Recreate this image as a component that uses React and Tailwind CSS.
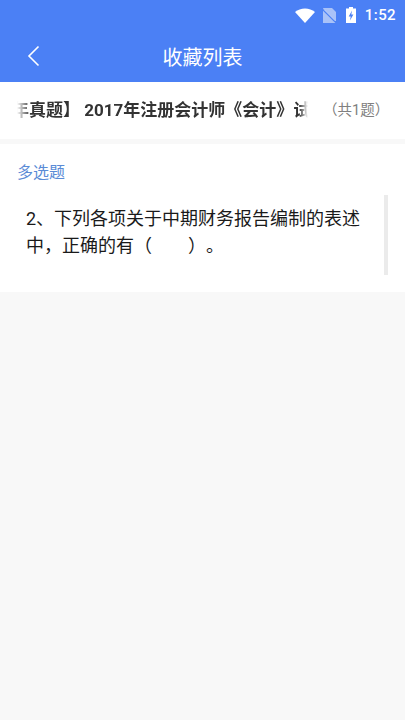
const CJK = "font-['Roboto','Noto_Sans_CJK_SC',sans-serif]";

function StatusBar() {
  return (
    <div className="h-[30px] flex items-center justify-end pr-[9px] text-white">
      {/* WIFI */}
      <svg width="20" height="15" viewBox="0 0 20 15" className="mr-[7px]">
        <path d="M0 4C2.8 1.6 6.2 0.4 10 0.4S17.2 1.6 20 4L10 15Z" fill="#fff" />
      </svg>
      {/* NO SIM */}
      <svg width="15" height="15" viewBox="0 0 15 15" className="mr-[9px]">
        <path d="M1 0h9l4 4v11H1Z" fill="#a9c2f8" />
        <path d="M0 0.5L14.5 15" stroke="#4b80f5" strokeWidth="1.6" />
        <path d="M2 1.5L13.5 13" stroke="#d5e1fc" strokeWidth="0.8" />
      </svg>
      {/* BATTERY */}
      <svg width="10" height="16" viewBox="0 0 10 16" className="mr-[9px]">
        <path d="M3 0h4v1.5h3V16H0V1.5h3Z" fill="#fff" />
        <path d="M6 3.5L2.7 9.5h2L4 13.5 7.4 7.5H5.3Z" fill="#4b80f5" />
      </svg>
      <span className="text-[15px] leading-none font-['Roboto',sans-serif] font-medium tracking-[0.4px]">1:52</span>
    </div>
  );
}

export default function App() {
  return (
    <div className={`w-[405px] h-[720px] flex flex-col bg-[#f8f8f8] overflow-hidden [text-spacing-trim:space-all] ${CJK}`}>

      {/* HEADER */}
      <div className="bg-[#4b80f5]">
        <StatusBar />
        <div className="h-[52px] relative flex items-center justify-center">
          <svg width="14" height="22" viewBox="0 0 14 22" className="absolute left-[27px] top-[15px]" fill="none">
            <path d="M11.5 1.5L2 11l9.5 9.5" stroke="#fff" strokeWidth="1.6" />
          </svg>
          <span className="pt-[4px] text-[20px] leading-none text-white">收藏列表</span>
        </div>
      </div>

      {/* PAPER TITLE */}
      <div className="h-[57px] bg-white flex items-center pl-[17px] pt-[1px]">
        <div className="w-[291px] overflow-hidden whitespace-nowrap [mask-image:linear-gradient(to_right,transparent,black_14px,black_282px,transparent)]">
          <span className="block -ml-[5px] text-[17px] font-bold text-[#333333]">年真题】 2017年注册会计师《会计》试</span>
        </div>
        <span className="ml-[15px] text-[14.5px] text-[#808080] whitespace-nowrap">（共1题）</span>
      </div>

      {/* QUESTION */}
      <div className="mt-[5px] h-[148px] bg-white">
        <p className="pl-[17px] pt-[18px] text-[16px] leading-[22px] text-[#5a8bd6]">多选题</p>
        <div className="mt-[11px] ml-[26px] mr-[17px] flex justify-between">
          <p className="w-[336px] pt-[10px] text-[18px] leading-[27px] text-[#1a1a1a]">
            2、下列各项关于中期财务报告编制的表述中，正确的有（　　）。
          </p>
          <div className="w-[4px] h-[80px] bg-[#ebebeb]" />
        </div>
      </div>

    </div>
  );
}
